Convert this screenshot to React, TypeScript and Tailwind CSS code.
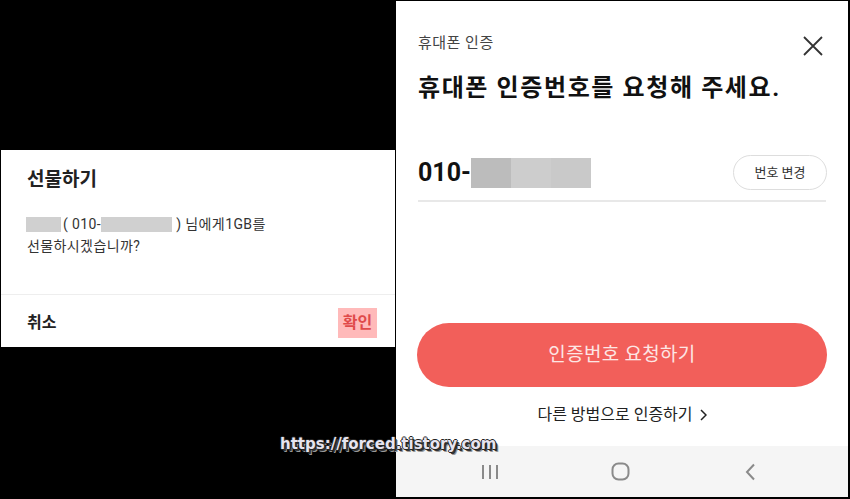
const ko = "font-['Roboto','Noto_Sans_CJK_KR',sans-serif]";

function GiftDialog() {
  return (
    <div className={`flex h-[197px] w-[394px] flex-col bg-white ${ko}`}>
      <div className="px-[26px] pt-[17px]">
        <h2 className="text-[19px] font-bold leading-[26px] text-[#222]">선물하기</h2>
        <p className="mt-[20px] text-[14px] leading-[22px] tracking-[0.4px] text-[#333]">
          <span className="flex items-center">
            <span className="ml-[-1px] inline-block h-[15px] w-[35px] bg-[#d0d0d0]" />
            <span className="ml-[2px]">( 010-</span>
            <span className="inline-block h-[15px] w-[71px] bg-[#d0d0d0]" />
            <span className="ml-[4px]">) 님에게1GB를</span>
          </span>
          <span className="block">선물하시겠습니까?</span>
        </p>
      </div>
      <div className="mt-auto h-px bg-[#eeeeee]" />
      <div className="flex h-[52px] items-center justify-between pl-[26px] pr-[18px] pt-[3px]">
        <span className="text-[16px] font-bold text-[#222]">취소</span>
        <span className="flex h-[30px] w-[39px] items-center justify-center bg-[#ffbaba] text-[16px] font-bold text-[#e04a4a]">
          확인
        </span>
      </div>
    </div>
  );
}

function NavBar() {
  return (
    <div className="mt-auto flex h-[51px] items-center bg-[#f5f5f5] pl-[29px]">
      <div className="flex w-[130px] justify-center">
        <svg width="18" height="16" viewBox="0 0 18 16" fill="none" stroke="#8a8a8a" strokeWidth="2">
          <path d="M2 1v14M9 1v14M16 1v14" />
        </svg>
      </div>
      <div className="flex w-[130px] justify-center">
        <svg width="19" height="19" viewBox="0 0 19 19" fill="none" stroke="#8a8a8a" strokeWidth="2">
          <rect x="1.5" y="1.5" width="16" height="16" rx="6" />
        </svg>
      </div>
      <div className="flex w-[130px] justify-center">
        <svg width="11" height="18" viewBox="0 0 11 18" fill="none" stroke="#8a8a8a" strokeWidth="2">
          <path d="M9 1.5 2 9l7 7.5" />
        </svg>
      </div>
    </div>
  );
}

function VerifyPanel() {
  return (
    <div className={`mt-px flex h-[496px] w-[452px] flex-col bg-white ${ko}`}>
      <div className="px-[22px]">
        {/* Header */}
        <div className="flex items-start justify-between pt-[32px]">
          <span className="text-[15px] leading-[20px] tracking-[0.5px] text-[#444]">휴대폰 인증</span>
          <svg className="mr-[3px] mt-[3px]" width="20" height="20" viewBox="0 0 20 20" fill="none" stroke="#333" strokeWidth="1.8">
            <path d="M1 1l18 18M19 1 1 19" />
          </svg>
        </div>
        <h1 className="mt-[17px] text-[24px] font-bold leading-[30px] tracking-[1.6px] text-[#111]">
          휴대폰 인증번호를 요청해 주세요.
        </h1>

        {/* Phone number */}
        <div className="mt-[52px] flex h-[35px] items-center justify-between">
          <div className="flex items-center">
            <span className="text-[25px] font-bold leading-none text-[#111]">010-</span>
            <span className="h-[30px] w-[40px] bg-[#bcbcbc]" />
            <span className="h-[30px] w-[40px] bg-[#cdcdcd]" />
            <span className="h-[30px] w-[40px] bg-[#c9c9c9]" />
          </div>
          <button className="mr-[-1px] flex h-[35px] w-[94px] items-center justify-center rounded-full border border-[#dddddd] text-[13px] text-[#333]">
            번호 변경
          </button>
        </div>
        <div className="mt-[10px] h-[2px] bg-[#e8e8e8]" />

        {/* Request button */}
        <button className="-mx-px mt-[121px] flex h-[64px] w-[410px] items-center justify-center rounded-full bg-[#f25f5a] text-[19px] tracking-[0.3px] text-[#fde6e4]">
          인증번호 요청하기
        </button>
        <div className="mt-[17px] flex items-center justify-center gap-[7px] text-[16px] leading-[22px] text-[#222]">
          다른 방법으로 인증하기
          <svg width="7" height="12" viewBox="0 0 7 12" fill="none" stroke="#222" strokeWidth="1.5">
            <path d="M1 1l5 5-5 5" />
          </svg>
        </div>
      </div>
      <NavBar />
    </div>
  );
}

export default function App() {
  return (
    <div className="relative flex h-[499px] w-[850px] bg-black">
      <div className="w-[396px] pl-px pt-[150px]">
        <GiftDialog />
      </div>
      <VerifyPanel />

      {/* Watermark */}
      <span className="absolute left-[280px] top-[434px] font-['DejaVu_Sans',sans-serif] text-[15px] font-bold leading-[20px] text-[#e6e4f0] [text-shadow:-1px_0_#222,1px_0_#222,0_-1px_#222,0_1px_#222,2px_2px_#333,3px_3px_#999]">
        https://forced.tistory.com
      </span>
    </div>
  );
}
